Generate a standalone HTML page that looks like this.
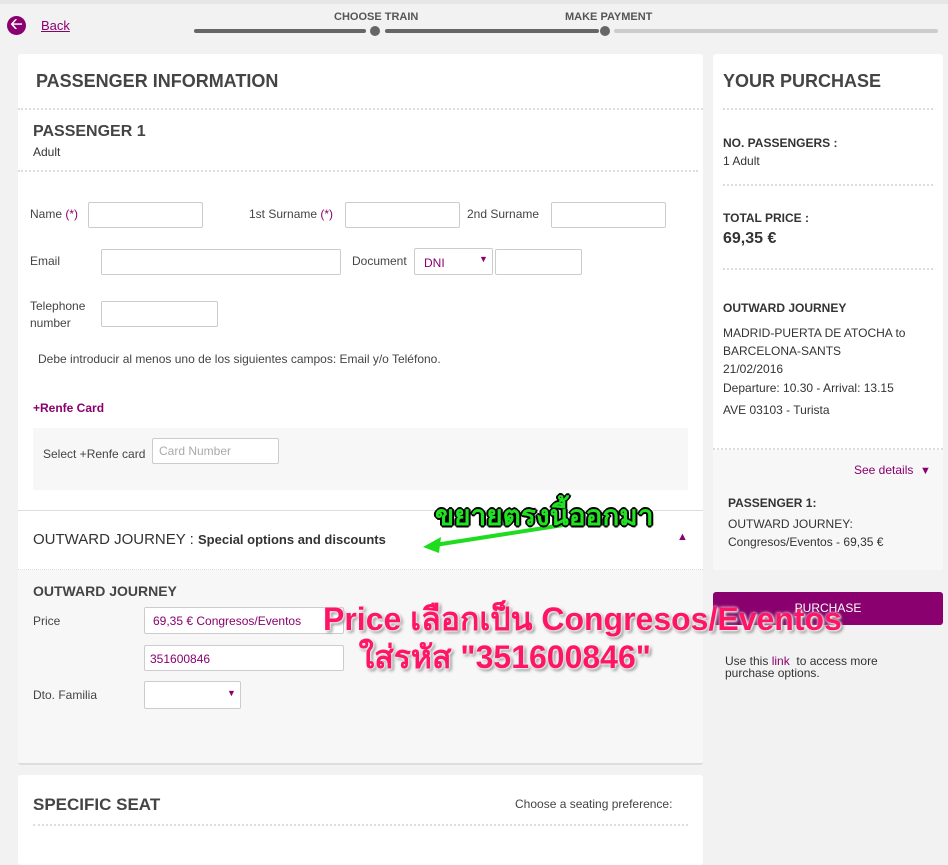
<!DOCTYPE html>
<html><head><meta charset="utf-8"><style>
*{box-sizing:border-box;margin:0;padding:0}
body{width:948px;height:858px;overflow:hidden;background:#f2f2f2;font-family:"Liberation Sans",sans-serif;color:#333;position:relative;font-size:12px}
.a{position:absolute}
.card{position:absolute;background:#fff;border-radius:3px}
.dot{border-top:2px dotted #ddd}
.in{position:absolute;background:#fff;border:1px solid #ccc;border-radius:2px;height:26px}
.lbl{position:absolute;font-size:12px;color:#444}
h2{font-size:18px;font-weight:bold;color:#444}
.pur{color:#8a006e}
</style></head><body>
<div class="a" style="left:0;top:0;width:948px;height:4px;background:#e6e6e6"></div>
<div class="a" style="left:7px;top:16px;width:19px;height:19px;border-radius:50%;background:#8a006e;color:#fff;font-size:15px;line-height:18px;text-align:center;font-weight:bold">&#129120;</div>
<div class="a pur" style="left:41px;top:18px;font-size:13px;text-decoration:underline">Back</div>
<div class="a" style="left:334px;top:11px;font-size:11px;font-weight:bold;color:#555">CHOOSE TRAIN</div>
<div class="a" style="left:565px;top:11px;font-size:11px;font-weight:bold;color:#555">MAKE PAYMENT</div>
<div class="a" style="left:194px;top:29px;width:172px;height:4px;background:#666;border-radius:2px"></div>
<div class="a" style="left:370px;top:26px;width:10px;height:10px;border-radius:50%;background:#666"></div>
<div class="a" style="left:385px;top:29px;width:214px;height:4px;background:#666;border-radius:2px"></div>
<div class="a" style="left:600px;top:26px;width:10px;height:10px;border-radius:50%;background:#666"></div>
<div class="a" style="left:614px;top:29px;width:324px;height:4px;background:#ccc;border-radius:2px"></div>

<div class="card" style="left:18px;top:54px;width:685px;height:711px;background:#f7f7f7;border-bottom:2px solid #ddd"></div>
<div class="card" style="left:18px;top:54px;width:685px;height:516px"></div>
<h2 class="a" style="left:36px;top:71px">PASSENGER INFORMATION</h2>
<div class="a dot" style="left:18px;top:108px;width:685px"></div>
<div class="a" style="left:33px;top:123px;font-size:16px;font-weight:bold;color:#444">PASSENGER 1</div>
<div class="a" style="left:33px;top:145px;font-size:12px">Adult</div>
<div class="a dot" style="left:18px;top:170px;width:680px"></div>

<div class="lbl" style="left:30px;top:207px">Name <span class="pur">(*)</span></div>
<div class="in" style="left:88px;top:202px;width:115px"></div>
<div class="lbl" style="left:249px;top:207px">1st Surname <span class="pur">(*)</span></div>
<div class="in" style="left:345px;top:202px;width:115px"></div>
<div class="lbl" style="left:467px;top:207px">2nd Surname</div>
<div class="in" style="left:551px;top:202px;width:115px"></div>
<div class="lbl" style="left:30px;top:254px">Email</div>
<div class="in" style="left:101px;top:249px;width:240px"></div>
<div class="lbl" style="left:352px;top:254px">Document</div>
<div class="in" style="left:414px;top:248px;width:79px;height:27px"><span class="pur a" style="left:9px;top:7px">DNI</span><span class="pur a" style="left:64px;top:5px;font-size:9px">&#9660;</span></div>
<div class="in" style="left:495px;top:249px;width:87px"></div>
<div class="lbl" style="left:30px;top:298px;line-height:17px">Telephone<br>number</div>
<div class="in" style="left:101px;top:301px;width:117px"></div>
<div class="lbl" style="left:38px;top:352px">Debe introducir al menos uno de los siguientes campos: Email y/o Teléfono.</div>
<div class="a pur" style="left:33px;top:401px;font-weight:bold">+Renfe Card</div>
<div class="a" style="left:33px;top:428px;width:655px;height:62px;background:#f7f7f7"></div>
<div class="lbl" style="left:43px;top:447px">Select +Renfe card</div>
<div class="in" style="left:152px;top:438px;width:127px;color:#aaa;padding:5px 6px">Card Number</div>

<div class="a" style="left:18px;top:510px;width:685px;border-top:1px solid #ddd"></div>
<div class="a" style="left:33px;top:531px;font-size:15px;color:#333">OUTWARD JOURNEY : <b style="font-size:13px">Special options and discounts</b></div>
<div class="a pur" style="left:677px;top:531px;font-size:11px">&#9650;</div>
<div class="a dot" style="left:18px;top:569px;width:685px;border-top-width:1px"></div>
<div class="a" style="left:33px;top:583px;font-size:14px;font-weight:bold;color:#444">OUTWARD JOURNEY</div>
<div class="lbl" style="left:33px;top:614px">Price</div>
<div class="in" style="left:144px;top:607px;width:200px;height:27px;padding:6px 8px" ><span class="pur">69,35 € Congresos/Eventos</span></div>
<div class="in" style="left:144px;top:645px;width:200px;height:26px;padding:6px 5px"><span class="pur">351600846</span></div>
<div class="lbl" style="left:33px;top:688px">Dto. Familia</div>
<div class="in" style="left:144px;top:681px;width:97px;height:28px"><span class="pur a" style="left:82px;top:6px;font-size:9px">&#9660;</span></div>

<div class="card" style="left:18px;top:775px;width:685px;height:90px"></div>
<h2 class="a" style="left:33px;top:795px;font-size:17px">SPECIFIC SEAT</h2>
<div class="lbl" style="left:515px;top:797px">Choose a seating preference:</div>
<div class="a dot" style="left:33px;top:824px;width:655px"></div>

<div class="card" style="left:713px;top:54px;width:230px;height:516px"></div>
<h2 class="a" style="left:723px;top:71px">YOUR PURCHASE</h2>
<div class="a dot" style="left:723px;top:108px;width:210px"></div>
<div class="a" style="left:723px;top:136px;font-weight:bold;font-size:12px">NO. PASSENGERS :</div>
<div class="a" style="left:723px;top:154px">1 Adult</div>
<div class="a dot" style="left:723px;top:184px;width:210px"></div>
<div class="a" style="left:723px;top:211px;font-weight:bold">TOTAL PRICE :</div>
<div class="a" style="left:723px;top:230px;font-weight:bold;font-size:16px">69,35 €</div>
<div class="a dot" style="left:723px;top:268px;width:210px"></div>
<div class="a" style="left:723px;top:301px;font-weight:bold">OUTWARD JOURNEY</div>
<div class="a" style="left:723px;top:324px;line-height:18px">MADRID-PUERTA DE ATOCHA to<br>BARCELONA-SANTS<br>21/02/2016</div>
<div class="a" style="left:723px;top:381px">Departure: 10.30 - Arrival: 13.15</div>
<div class="a" style="left:723px;top:403px">AVE 03103 - Turista</div>
<div class="a dot" style="left:713px;top:448px;width:230px"></div>
<div class="a" style="left:713px;top:450px;width:230px;height:120px;background:#f7f7f7;border-radius:0 0 3px 3px"></div>
<div class="a pur" style="left:854px;top:463px">See details &nbsp;<span style="font-size:11px">&#9660;</span></div>
<div class="a" style="left:728px;top:496px;font-weight:bold">PASSENGER 1:</div>
<div class="a" style="left:728px;top:517px">OUTWARD JOURNEY:</div>
<div class="a" style="left:728px;top:535px">Congresos/Eventos - 69,35 €</div>

<div class="a" style="left:713px;top:592px;width:230px;height:33px;background:#8a006e;border-radius:3px;color:#fff;text-align:center;line-height:32px;font-size:12px">PURCHASE</div>
<div class="a" style="left:725px;top:655px;line-height:12px">Use this <span class="pur">link</span> &nbsp;to access more<br>purchase options.</div>

<svg class="a" style="left:415px;top:515px" width="160" height="40"><path d="M148 10 L20 30" stroke="#1fdc1f" stroke-width="4"/><path d="M8 32 L26 22 L24 38 Z" fill="#1fdc1f"/></svg>
<div class="a" style="left:435px;top:494px;font-size:28px;font-weight:bold;color:#22e022;text-shadow:-2px 0 #000,2px 0 #000,0 -2px #000,0 2px #000,-1px -1px #000,1px 1px #000,-1px 1px #000,1px -1px #000;font-family:'Liberation Sans','DejaVu Sans',sans-serif">ขยายตรงนี้ออกมา</div>
<div class="a" style="left:323px;top:600px;font-size:32px;font-weight:bold;color:#ff1565;line-height:38px;text-shadow:0 0 3px #fff,1px 1px 2px #fff,2px 2px 3px #555;font-family:'Liberation Sans','DejaVu Sans',sans-serif">Price เลือกเป็น Congresos/Eventos<br>&nbsp;&nbsp;&nbsp;&nbsp;ใส่รหัส "351600846"</div>
</body></html>
